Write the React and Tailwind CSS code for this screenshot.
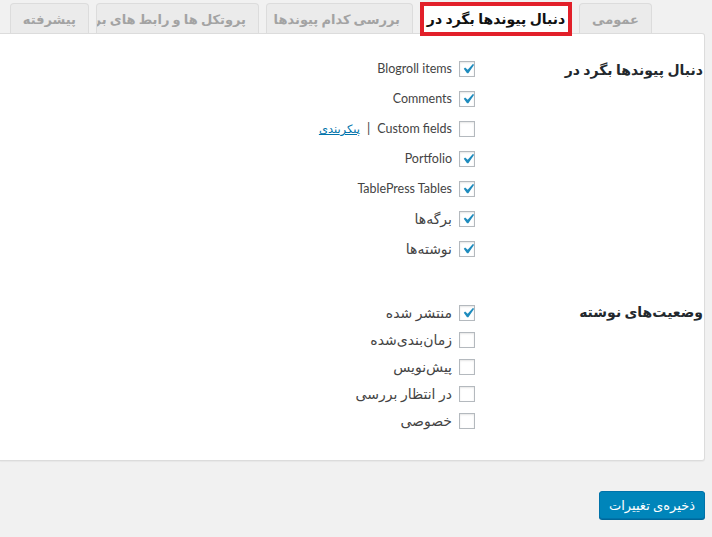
import React from "react";

const tabs = [
  { label: "عمومی", w: "w-[73px]" },
  { label: "دنبال پیوندها بگرد در", w: "w-[152px]", active: true },
  { label: "بررسی کدام پیوندها", w: "w-[147px]" },
  { label: "پروتکل ها و رابط های برنامه نویسی", w: "w-[163px]" },
  { label: "پیشرفته", w: "w-[79px]" },
];

const searchIn = [
  { label: "Blogroll items", checked: true, latin: true },
  { label: "Comments", checked: true, latin: true },
  { label: "Custom fields", checked: false, latin: true, link: "پیکربندی" },
  { label: "Portfolio", checked: true, latin: true },
  { label: "TablePress Tables", checked: true, latin: true },
  { label: "برگه‌ها", checked: true },
  { label: "نوشته‌ها", checked: true },
];

const statuses = [
  { label: "منتشر شده", checked: true },
  { label: "زمان‌بندی‌شده", checked: false },
  { label: "پیش‌نویس", checked: false },
  { label: "در انتظار بررسی", checked: false },
  { label: "خصوصی", checked: false },
];

const Checkbox = ({ checked }) => (
  <span className="relative w-4 h-4 shrink-0 border border-[#b4b9be] bg-white shadow-[inset_0_1px_2px_rgba(0,0,0,0.1)]">
    {checked && (
      <svg
        viewBox="0 0 20 20"
        className="absolute -top-[3px] -left-[2px] w-[20px] h-[20px]"
      >
        <path
          d="M14.83 4.89l1.34.94-5.81 8.38H9.02L5.78 9.67l1.34-1.25 2.57 2.4z"
          fill="#1e8cbe"
        />
      </svg>
    )}
  </span>
);

const Row = ({ item, h }) => (
  <div className={`flex items-center gap-[7px] ${h}`}>
    <Checkbox checked={item.checked} />
    <span
      dir={item.latin ? "ltr" : "rtl"}
      className={`${item.latin ? "text-[12.5px]" : "text-[14px]"} text-[#444] leading-none`}
    >
      {item.label}
    </span>
    {item.link && (
      <>
        <span className="text-[13px] text-[#444]">|</span>
        <a className="text-[11.5px] text-[#0073aa] underline cursor-pointer">
          {item.link}
        </a>
      </>
    )}
  </div>
);

export default function App() {
  return (
    <div
      dir="rtl"
      className="w-[712px] h-[537px] bg-[#f1f1f1] overflow-hidden"
      style={{ fontFamily: '"Lato", "DejaVu Sans", sans-serif' }}
    >
      {/* tabs */}
      <div className="flex items-end pt-[3px] pr-[60px] gap-[7px]">
        {tabs.map((t) =>
          t.active ? (
            <div key={t.label} className={`relative h-[30px] ${t.w}`}>
              <div className="absolute -top-[1px] -bottom-[3px] left-0 right-0 z-10 border-4 border-[#e2202a] bg-white flex items-center justify-center">
                <span className="text-[14px] font-bold text-[#111] whitespace-nowrap pb-[1px]">
                  {t.label}
                </span>
              </div>
            </div>
          ) : (
            <div
              key={t.label}
              className={`h-[30px] ${t.w} px-3 pt-[2px] border border-b-0 border-[#dcdcdc] rounded-t-[4px] bg-[#ebebeb] overflow-hidden whitespace-nowrap text-center leading-[27px] text-[13px] font-bold text-[#a3a3a3]`}
            >
              {t.label}
            </div>
          )
        )}
      </div>

      {/* panel */}
      <div className="mr-[7px] h-[428px] bg-white border-t border-r border-b border-[#dcdcdc] rounded-tr-[3px] rounded-br-[3px] shadow-[0_1px_1px_rgba(0,0,0,0.04)] pt-[20px]">
        <div className="flex">
          <div className="w-[229px] shrink-0 pt-[6px] pr-[1px]">
            <h3 className="text-[14px] font-bold text-[#23282d] leading-[20px]">
              دنبال پیوندها بگرد در
            </h3>
          </div>
          <div className="flex flex-col">
            {searchIn.map((it) => (
              <Row key={it.label} item={it} h="h-[30px]" />
            ))}
          </div>
        </div>

        <div className="flex mt-[35px]">
          <div className="w-[229px] shrink-0 pt-[3px] pr-[1px]">
            <h3 className="text-[14px] font-bold text-[#23282d] leading-[20px]">
              وضعیت‌های نوشته
            </h3>
          </div>
          <div className="flex flex-col">
            {statuses.map((it) => (
              <Row key={it.label} item={it} h="h-[27px]" />
            ))}
          </div>
        </div>
      </div>

      {/* save */}
      <div className="pr-[7px] pt-[30px] flex">
        <button className="h-[28px] px-[9px] bg-[#0085ba] border border-[#0073aa] rounded-[3px] shadow-[0_1px_0_#006799] text-white text-[13px] leading-none">
          ذخیره‌ی تغییرات
        </button>
      </div>
    </div>
  );
}
